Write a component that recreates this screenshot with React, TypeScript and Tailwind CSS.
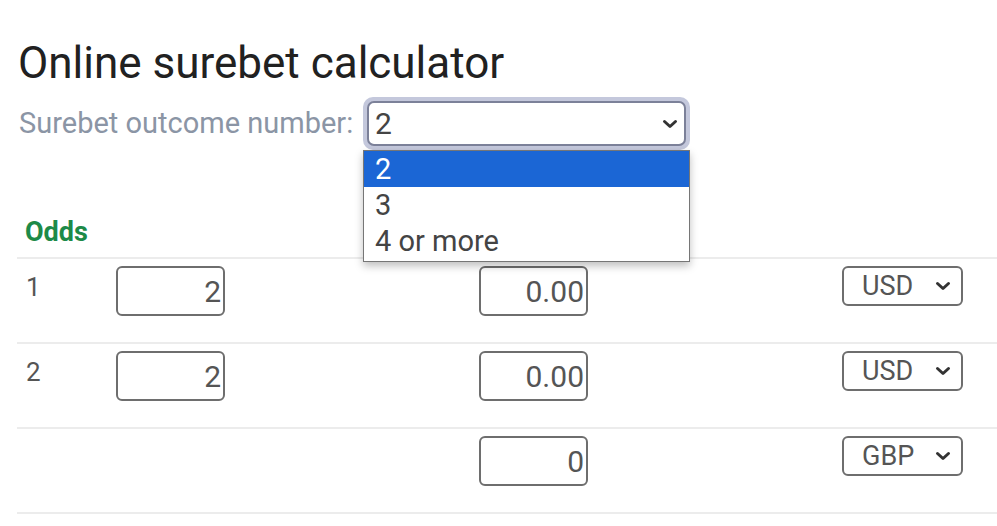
import React from "react";

const OPTIONS = ["2", "3", "4 or more"];

const ROWS = [
  { n: "1", odds: "2", stake: "0.00", cur: "USD" },
  { n: "2", odds: "2", stake: "0.00", cur: "USD" },
  { n: "", odds: null, stake: "0", cur: "GBP" },
];

function Chevron({ className = "" }: { className?: string }) {
  return (
    <svg viewBox="0 0 16 10" className={className} fill="none">
      <path d="M2.5 2.5 L8 7.5 L13.5 2.5" stroke="#333" strokeWidth="3" strokeLinecap="round" strokeLinejoin="round" />
    </svg>
  );
}

function NumberBox({ value }: { value: string }) {
  return (
    <input
      readOnly
      value={value}
      className="w-[109px] h-[50px] border-2 border-[#6e6e6e] rounded-[6px] bg-white text-right pr-[2px] text-[30px] text-[#555] outline-none font-['Roboto',sans-serif]"
    />
  );
}

function CurrencySelect({ value }: { value: string }) {
  return (
    <div className="w-[121px] h-[40px] border-2 border-[#6e6e6e] rounded-[6px] bg-white flex items-center justify-between pl-[18px] pr-[10px]">
      <span className="text-[27px] text-[#555] leading-none">{value}</span>
      <Chevron className="w-[16px] h-[10px]" />
    </div>
  );
}

export default function App() {
  return (
    <div className="min-h-[526px] bg-white font-['Roboto',sans-serif] overflow-hidden">
      <h1 className="pt-[37px] pl-[18px] text-[44px] leading-[52px] text-[#212121] whitespace-nowrap">
        Online surebet calculator
      </h1>

      <div className="mt-[8px] flex items-center pl-[19px]">
        <label className="w-[344px] text-[29px] leading-[53px] text-[#8b95a5] whitespace-nowrap">
          Surebet outcome number:
        </label>
        <div className="relative z-10">
          <div className="w-[327px] h-[53px] rounded-[10px] bg-[#c4c8dc] p-[4px]">
            <div className="h-full border-2 border-[#7c8199] rounded-[7px] bg-white flex items-center justify-between pl-[6px] pr-[6px]">
              <span className="text-[30px] text-[#444] leading-none">2</span>
              <Chevron className="w-[16px] h-[10px]" />
            </div>
          </div>
          <ul className="absolute top-[53px] left-0 w-[327px] border border-[#767676] bg-white pb-[2px] shadow-[0_4px_8px_rgba(0,0,0,0.25)]">
            {OPTIONS.map((o, i) => (
              <li
                key={o}
                className={
                  i === 0
                    ? "h-[36px] pl-[11px] text-[29px] leading-[36px] bg-[#1b66d5] text-white"
                    : "h-[36px] pl-[11px] text-[29px] leading-[36px] text-[#444]"
                }
              >
                {o}
              </li>
            ))}
          </ul>
        </div>
      </div>

      <div className="ml-[17px]">
        <div className="h-[107px] flex items-end pb-[9px] pl-[8px]">
          <span className="text-[27px] leading-[32px] font-bold text-[#1d8a48]">Odds</span>
        </div>
        {ROWS.map((r, i) => (
          <div
            key={i}
            className="h-[85px] border-t-2 border-[#ececec] grid grid-cols-[99px_363px_363px_1fr] items-start pt-[7px]"
          >
            <span className="mt-[6px] pl-[9px] text-[26px] leading-[30px] text-[#555]">{r.n}</span>
            <div>{r.odds !== null && <NumberBox value={r.odds} />}</div>
            <div>
              <NumberBox value={r.stake} />
            </div>
            <div>
              <CurrencySelect value={r.cur} />
            </div>
          </div>
        ))}
        <div className="border-t-2 border-[#ececec]" />
      </div>
    </div>
  );
}
